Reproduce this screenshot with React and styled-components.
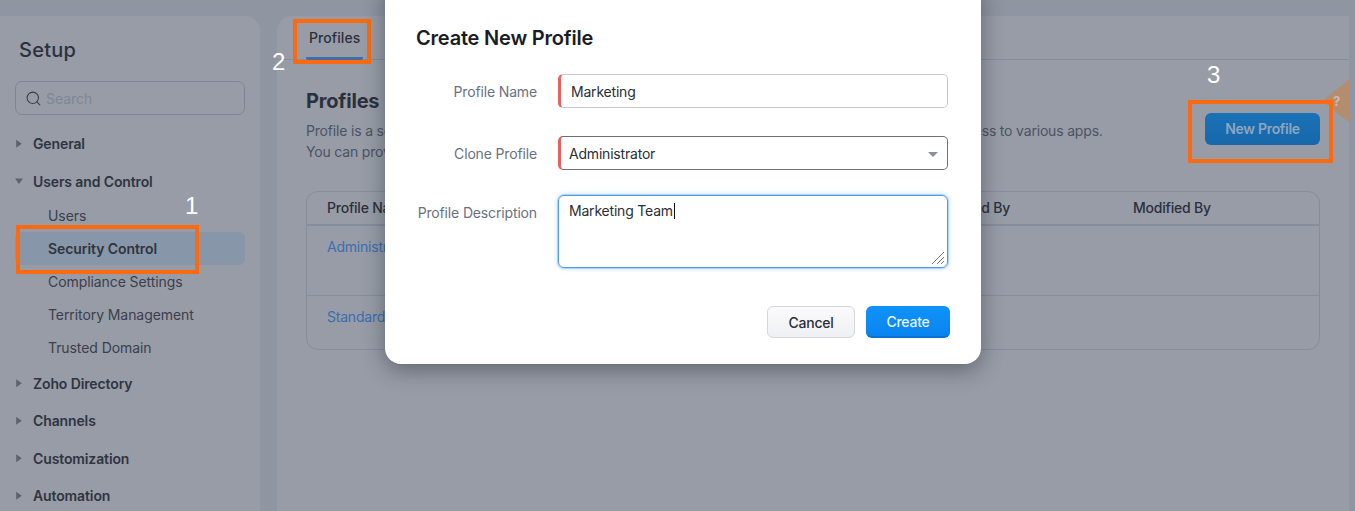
import React from "react";
import styled, { createGlobalStyle } from "styled-components";
import { Search } from "lucide-react";

const Global = createGlobalStyle`
  html, body { margin: 0; padding: 0; height: 100%; overflow: hidden; background: #8f95a1; }
  * { box-sizing: border-box; }
  body { font-family: Inter, "Noto Sans", "Liberation Sans", sans-serif; -webkit-font-smoothing: antialiased; }
`;

const Page = styled.div`
  position: relative;
  width: 1355px;
  height: 511px;
  overflow: hidden;
  display: flex;
  gap: 15px;
  padding: 15px 5px 0 0;
  background: #8f95a1;
`;

const Sidebar = styled.aside`
  flex: 0 0 261px;
  height: 520px;
  background: #979ca7;
  border: 1px solid #9096a3;
  border-left: 0;
  border-radius: 0 16px 0 0;
  padding: 22px 15px 0 15px;
`;

const SetupTitle = styled.h2`
  margin: 0 0 19px 4px;
  font-size: 20px;
  line-height: 24px;
  font-weight: 500;
  color: #2b303c;
  letter-spacing: 0.25px;
`;

const SearchBox = styled.div`
  height: 34px;
  width: 230px;
  border: 1px solid #7f8695;
  border-radius: 7px;
  display: flex;
  align-items: center;
  gap: 4px;
  padding-left: 9px;
  color: #3a3f4b;
  margin-bottom: 10px;
`;

const SearchHint = styled.span`
  font-size: 14px;
  color: #808794;
  letter-spacing: -0.05px;
`;

const Group = styled.div`
  height: 37.5px;
  display: flex;
  align-items: center;
  gap: 10px;
  font-size: 14px;
  font-weight: 600;
  color: #2f3440;
  letter-spacing: -0.12px;
`;

const Caret = styled.span`
  width: 8px;
  height: 8px;
  flex: 0 0 8px;
  background: #5d626d;
  clip-path: ${(p) => (p.$open ? "polygon(0 15%, 100% 15%, 50% 85%)" : "polygon(15% 0, 85% 50%, 15% 100%)")};
`;

const SubList = styled.div`
  display: flex;
  flex-direction: column;
  margin: -1px 0 0.5px 0;
`;

const SubItem = styled.div`
  height: 33px;
  display: flex;
  align-items: center;
  padding-left: 33px;
  font-size: 14px;
  letter-spacing: -0.08px;
  border-radius: 6px;
  font-weight: ${(p) => (p.$active ? 600 : 400)};
  color: ${(p) => (p.$active ? "#2f3440" : "#3b404c")};
  background: ${(p) => (p.$active ? "#8796a8" : "transparent")};
`;

const Main = styled.main`
  flex: 1;
  height: 520px;
  background: #979ca7;
  border: 1px solid #9096a3;
  border-radius: 16px 0 0 0;
`;

const TabBar = styled.div`
  height: 44px;
  border-bottom: 1px solid #868d9b;
  padding-left: 29px;
  display: flex;
`;

const Tab = styled.div`
  height: 44px;
  padding: 13px 3px 0;
  display: flex;
  align-items: flex-start;
  font-size: 14px;
  font-weight: 500;
  color: #2b303c;
  letter-spacing: 0.08px;
  border-bottom: 3px solid #3f6ea8;
  border-radius: 0 0 2px 2px;
`;

const Content = styled.div`
  padding: 28px 29px 0 29px;
`;

const HeadRow = styled.div`
  display: flex;
  justify-content: space-between;
  height: 103px;
`;

const Heading = styled.h1`
  margin: 0 0 6px;
  font-size: 20px;
  line-height: 26px;
  font-weight: 700;
  color: #2b303c;
  letter-spacing: -0.2px;
`;

const Desc = styled.p`
  margin: 0;
  font-size: 14px;
  line-height: 21px;
  color: #4d5361;
  letter-spacing: -0.18px;
  white-space: nowrap;
`;

const NewButton = styled.div`
  width: 115px;
  height: 32px;
  margin-top: 25px;
  padding-bottom: 2px;
  border-radius: 6px;
  background: linear-gradient(#1a72b6, #1767aa);
  color: #8ea6bf;
  font-size: 14px;
  font-weight: 600;
  letter-spacing: -0.3px;
  display: flex;
  align-items: center;
  justify-content: center;
`;

const Table = styled.div`
  width: 1014px;
  height: 159px;
  border: 1px solid #868d9b;
  border-radius: 12px;
`;

const Row = styled.div`
  display: grid;
  grid-template-columns: 611px 195px 1fr;
  padding: ${(p) => (p.$head ? "6px 20px 0" : "11px 20px 0")};
  height: ${(p) => p.$h}px;
  border-bottom: ${(p) => (p.$last ? "0" : p.$head ? "2px solid #868d9b" : "1px solid #868d9b")};
  font-size: 14px;
  line-height: 20px;
  letter-spacing: -0.22px;
`;

const HeadCell = styled.span`
  font-weight: 500;
  color: #2b303c;
`;

const LinkCell = styled.span`
  color: #3c6eb0;
`;

const Help = styled.div`
  position: absolute;
  left: 1322px;
  top: 79px;
  width: 28px;
  height: 44px;
  background: #b38d6e;
  clip-path: polygon(100% 0, 100% 100%, 0 50%);
  color: #cdbba8;
  font-size: 13px;
  font-weight: 700;
  line-height: 16px;
  padding: 14px 0 0 11px;
`;

const Mark = styled.div`
  position: absolute;
  left: ${(p) => p.$x}px;
  top: ${(p) => p.$y}px;
  width: ${(p) => p.$w}px;
  height: ${(p) => p.$h}px;
  border: 4px solid #fb6a10;
`;

const Num = styled.span`
  position: absolute;
  left: ${(p) => p.$x}px;
  top: ${(p) => p.$y}px;
  color: #fff;
  font-family: "Liberation Sans", sans-serif;
  font-size: 24px;
  line-height: 24px;
`;

const Modal = styled.div`
  position: absolute;
  left: 385px;
  top: -20px;
  width: 596px;
  height: 384px;
  background: #fff;
  border-radius: 16px;
  box-shadow: 0 6px 22px rgba(30, 35, 45, 0.45);
  padding: 46px 31px 0;
  display: flex;
  flex-direction: column;
`;

const ModalTitle = styled.h3`
  margin: 0 0 24px;
  font-size: 20px;
  line-height: 24px;
  font-weight: 600;
  color: #1b1d23;
  letter-spacing: -0.2px;
`;

const FormRow = styled.div`
  display: grid;
  grid-template-columns: 121px 390px;
  column-gap: 21px;
  margin-bottom: ${(p) => p.$mb || 28}px;
`;

const Label = styled.div`
  height: 34px;
  text-align: right;
  font-size: 14px;
  line-height: 35px;
  color: #6a7182;
  letter-spacing: -0.15px;
  white-space: nowrap;
  margin-left: -20px;
`;

const Field = styled.div`
  position: relative;
  height: 34px;
  border: 1px solid ${(p) => p.$border};
  border-left: 3px solid #e8605f;
  border-radius: 5px;
  padding-left: ${(p) => p.$pad}px;
  font-size: 14px;
  color: #2a2e38;
  letter-spacing: -0.2px;
  display: flex;
  align-items: center;
`;

const FocusField = styled.div`
  position: relative;
  height: 73px;
  border: 1px solid #4f9be8;
  border-radius: 6px;
  box-shadow: 0 0 0 1px rgba(90, 162, 232, 0.3), 0 0 5px rgba(90, 162, 232, 0.55);
  padding: 7px 0 0 10px;
  font-size: 14px;
  line-height: 16px;
  color: #2a2e38;
  letter-spacing: -0.2px;
  display: flex;
  align-items: flex-start;
`;

const TextCaret = styled.span`
  display: inline-block;
  width: 1px;
  height: 16px;
  background: #111;
  margin-left: 1px;
`;

const SelectArrow = styled.span`
  position: absolute;
  right: 9px;
  top: 15px;
  width: 10px;
  height: 5px;
  background: #8a8f99;
  clip-path: polygon(0 0, 100% 0, 50% 100%);
`;

const Grip = styled.svg`
  position: absolute;
  right: 2px;
  bottom: 2px;
`;

const Actions = styled.div`
  display: flex;
  justify-content: flex-end;
  gap: 11px;
`;

const Btn = styled.div`
  width: ${(p) => p.$w}px;
  height: 32px;
  border-radius: 6px;
  font-size: 14px;
  font-weight: 500;
  letter-spacing: -0.25px;
  display: flex;
  align-items: center;
  justify-content: center;
  color: ${(p) => (p.$primary ? "#e8f4ff" : "#2a2e38")};
  background: ${(p) => (p.$primary ? "linear-gradient(#0f93fb, #0a84ee)" : "linear-gradient(#fbfbfc, #eff0f3)")};
  border: ${(p) => (p.$primary ? "0" : "1px solid #d4d6dc")};
  border-bottom: ${(p) => (p.$primary ? "2px solid #0671cf" : "1px solid #d4d6dc")};
`;

export default function App() {
  return (
    <Page>
      <Global />
      <Sidebar>
        <SetupTitle>Setup</SetupTitle>
        <SearchBox>
          <Search size={17} strokeWidth={1.5} />
          <SearchHint>Search</SearchHint>
        </SearchBox>
        <Group><Caret />General</Group>
        <Group><Caret $open />Users and Control</Group>
        <SubList>
          <SubItem>Users</SubItem>
          <SubItem $active>Security Control</SubItem>
          <SubItem>Compliance Settings</SubItem>
          <SubItem>Territory Management</SubItem>
          <SubItem>Trusted Domain</SubItem>
        </SubList>
        <Group><Caret />Zoho Directory</Group>
        <Group><Caret />Channels</Group>
        <Group><Caret />Customization</Group>
        <Group><Caret />Automation</Group>
      </Sidebar>
      <Main>
        <TabBar>
          <Tab>Profiles</Tab>
        </TabBar>
        <Content>
          <HeadRow>
            <div>
              <Heading>Profiles</Heading>
              <Desc>Profile is a set of permissions dictating the actions users may perform and determining their level of access to various apps.</Desc>
              <Desc>You can provide different levels of access to users by assigning them profiles.</Desc>
            </div>
            <NewButton>New Profile</NewButton>
          </HeadRow>
          <Table>
            <Row $head $h={34}>
              <HeadCell>Profile Name</HeadCell>
              <HeadCell>Created By</HeadCell>
              <HeadCell>Modified By</HeadCell>
            </Row>
            <Row $h={70}><LinkCell>Administrator</LinkCell></Row>
            <Row $last $h={53}><LinkCell>Standard</LinkCell></Row>
          </Table>
        </Content>
      </Main>

      <Help>?</Help>
      <Mark $x={16} $y={225} $w={183} $h={49} />
      <Mark $x={293} $y={19} $w={78} $h={45} />
      <Mark $x={1188} $y={100} $w={145} $h={63} />
      <Num $x={185} $y={194}>1</Num>
      <Num $x={272} $y={50}>2</Num>
      <Num $x={1207} $y={63}>3</Num>

      <Modal>
        <ModalTitle>Create New Profile</ModalTitle>
        <FormRow>
          <Label>Profile Name</Label>
          <Field $border="#c8c9cd" $pad={10}>Marketing</Field>
        </FormRow>
        <FormRow $mb={25}>
          <Label>Clone Profile</Label>
          <Field $border="#6d7079" $pad={8}>
            Administrator
            <SelectArrow />
          </Field>
        </FormRow>
        <FormRow $mb={38}>
          <Label>Profile Description</Label>
          <FocusField>
            Marketing Team<TextCaret />
            <Grip width="14" height="14" viewBox="0 0 14 14" fill="none" stroke="#777" strokeWidth="1">
              <path d="M1 13 13 1M6 13l7-7M10 13l3-3" />
            </Grip>
          </FocusField>
        </FormRow>
        <Actions>
          <Btn $w={88}>Cancel</Btn>
          <Btn $w={84} $primary>Create</Btn>
        </Actions>
      </Modal>
    </Page>
  );
}
